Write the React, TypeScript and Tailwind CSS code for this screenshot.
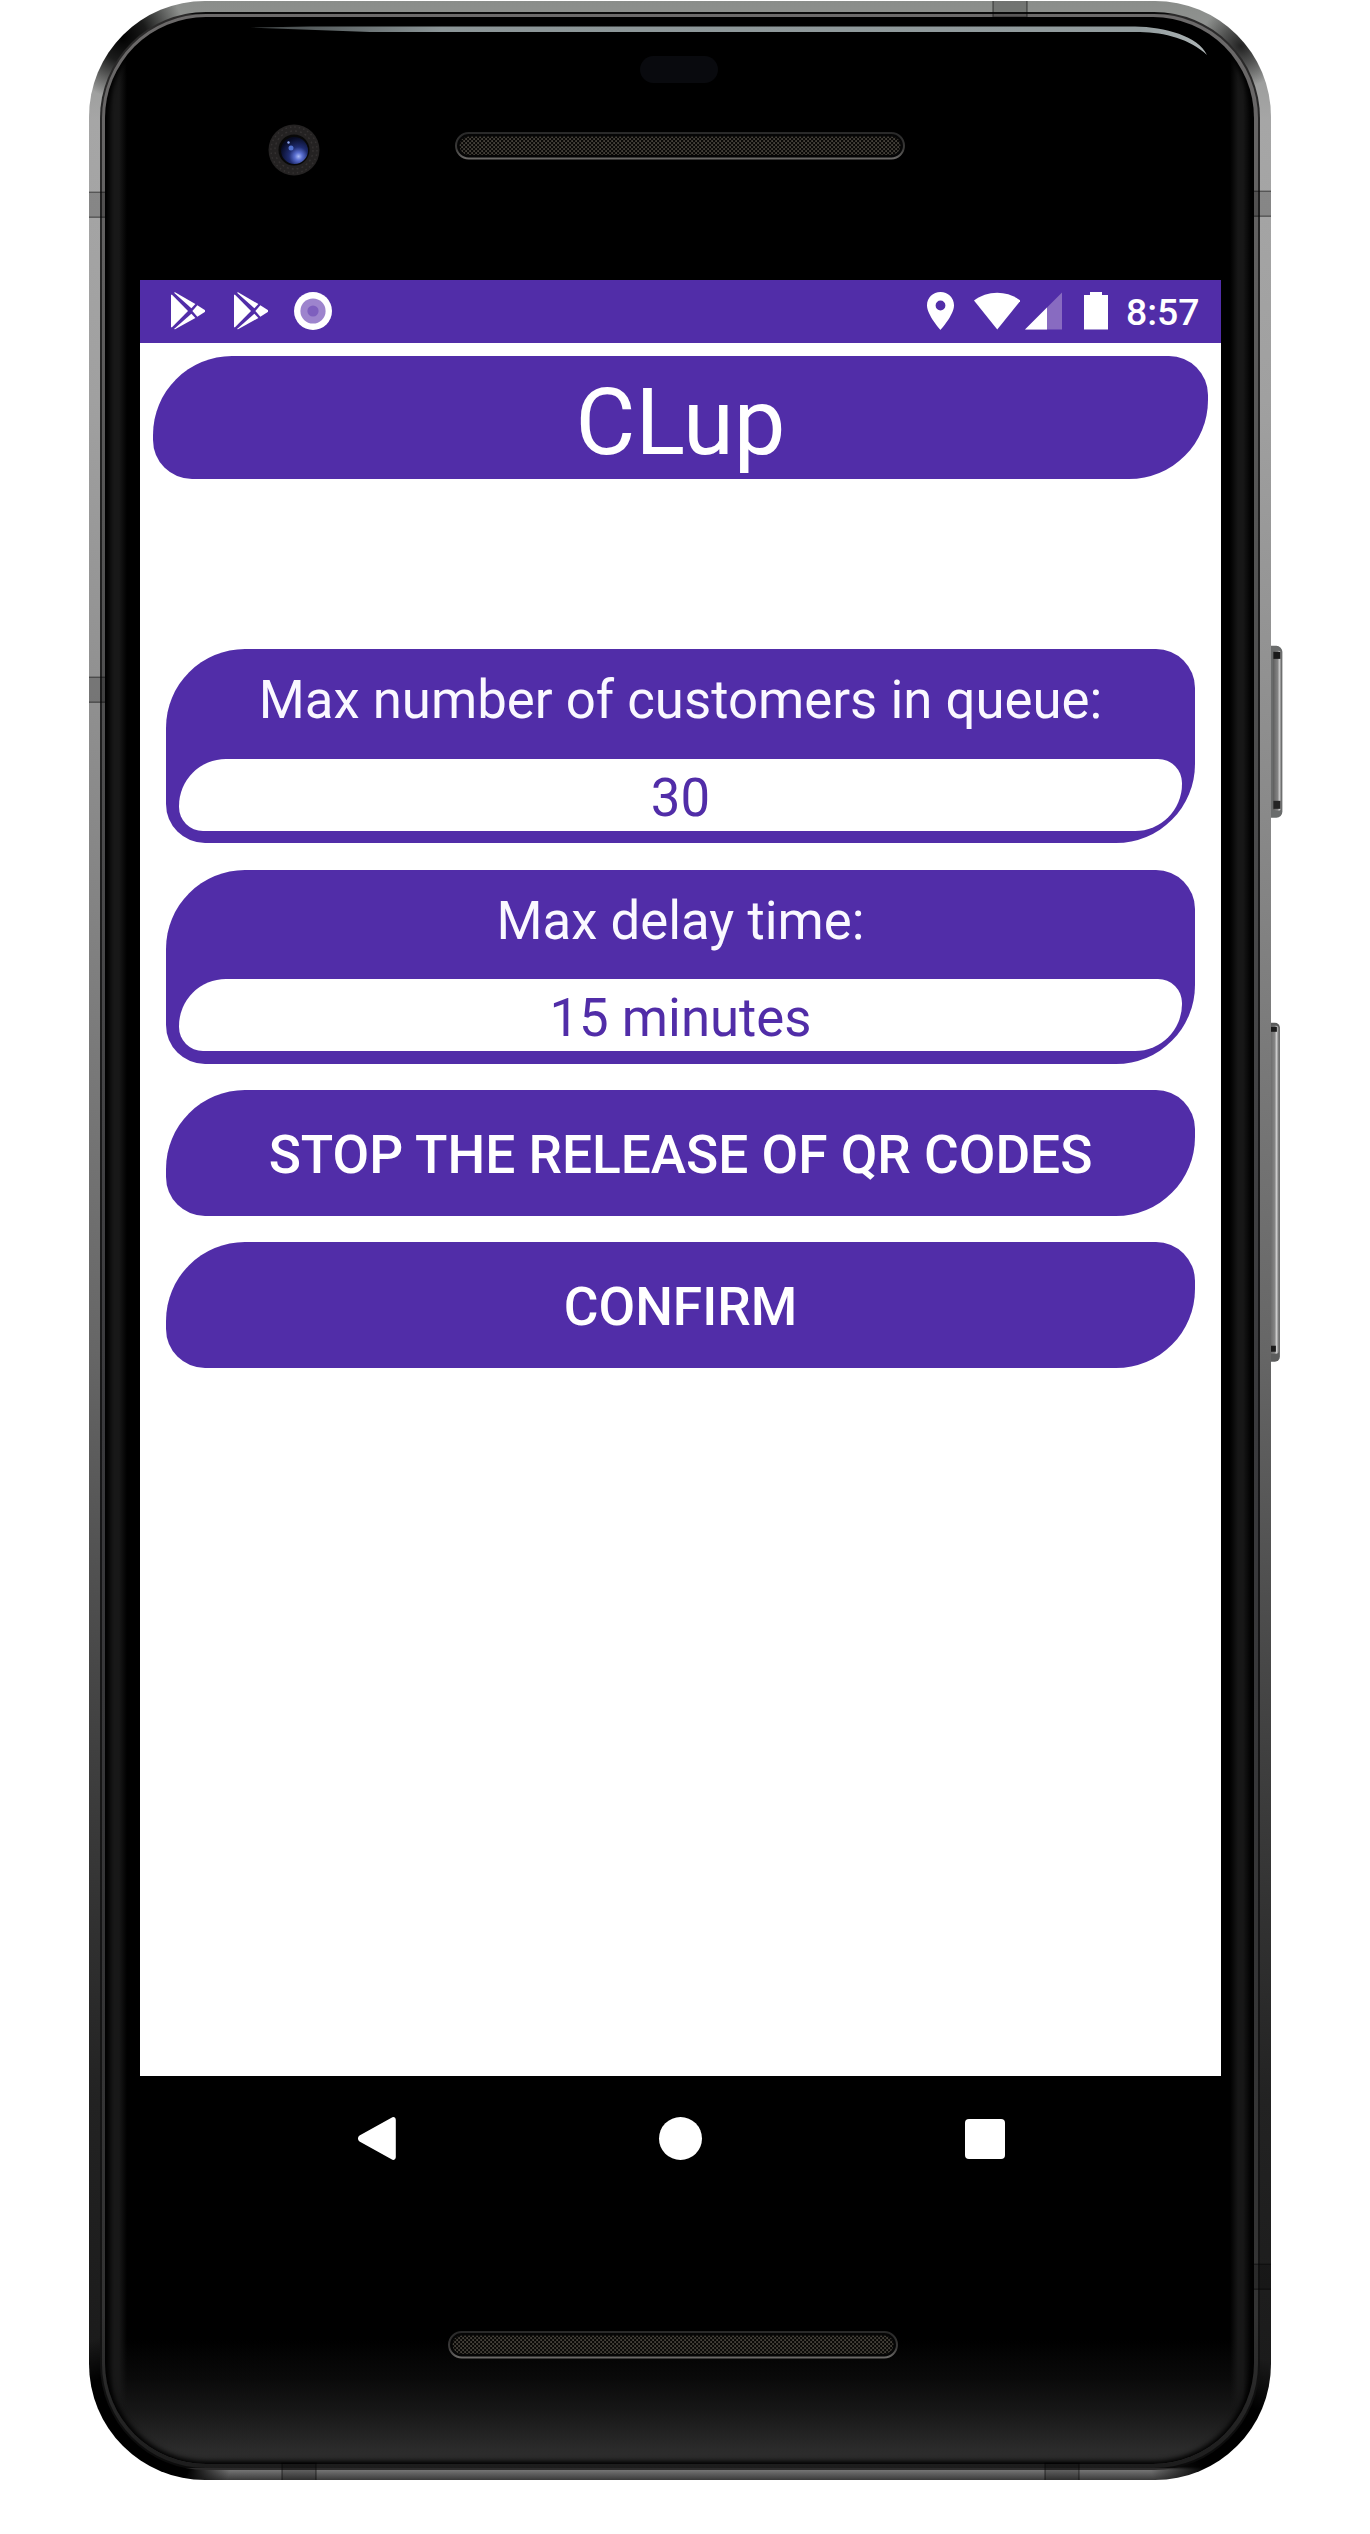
import React from "react";

const card =
  "rounded-tl-[79px] rounded-tr-[39px] rounded-br-[79px] rounded-bl-[39px] bg-[#512da8]";

function PlayIcon() {
  return (
    <svg className="h-[37.7px] w-[34.4px]" viewBox="0 0 103 113" fill="#fff">
      <path d="M0 8 3 8 51 57 3 106 0 106Z" />
      <path d="M9 2 12 1 73 36 61 49Z" />
      <path d="M9 111 12 112 73 78 61 65Z" />
      <path d="M79 40 100 53Q105 57 100 61L79 74 64 57Z" />
    </svg>
  );
}

function StatusBar() {
  return (
    <div className="flex h-[63px] items-start justify-between bg-[#512da8] pl-[31px] pr-[21.5px] pt-[12.3px]">
      <div className="flex items-start gap-[28.6px]">
        <PlayIcon />
        <PlayIcon />
        <svg className="-ml-[2.6px] h-[38px] w-[38px]" viewBox="0 0 38 38">
          <circle cx="19" cy="19" r="19" fill="#fff" />
          <circle cx="19" cy="19" r="12.6" fill="#9d84cd" />
          <circle cx="19" cy="19" r="5.6" fill="#7e5fbe" />
        </svg>
      </div>
      <div className="flex items-start gap-[20px]">
        <svg className="h-[38px] w-[27px]" viewBox="0 0 27 38" fill="#fff">
          <path
            fillRule="evenodd"
            d="M13.5 0C6 0 0 5.9 0 13.3 0 23.2 13.5 38 13.5 38S27 23.2 27 13.3C27 5.9 21 0 13.5 0Zm0 8.6a4.9 4.9 0 1 1 0 9.8 4.9 4.9 0 0 1 0-9.8Z"
          />
        </svg>
        <div className="flex gap-[5px]">
          <svg className="h-[38px] w-[46.5px]" viewBox="0 0 46.5 38" fill="#fff">
            <path d="M0 8.6C6.5 3.6 14.5.8 23.25.8S40 3.6 46.5 8.6L23.25 37.5Z" />
          </svg>
          <svg className="h-[38px] w-[37px]" viewBox="0 0 37 38">
            <path d="M0 37.5 37 .5V37.5Z" fill="#886bc1" />
            <path d="M0 37.5 22 15.5V37.5Z" fill="#fff" />
          </svg>
        </div>
        <svg className="ml-[2px] h-[38px] w-[24px]" viewBox="0 0 24 38" fill="#fff">
          <path d="M6 0H18V3H24V37.5H0V3H6Z" />
        </svg>
        <span className="-ml-[2.5px] pt-px text-[37.4px] font-medium leading-[38px] text-white">8:57</span>
      </div>
    </div>
  );
}

function Field({ label, value }: { label: string; value: string }) {
  return (
    <section className={`flex h-[194.2px] flex-col px-[13px] text-center text-[52.75px] ${card}`}>
      <h2 className="h-[109.9px] pt-[20px] leading-[62px] text-[#faf8ff]">{label}</h2>
      <div className="h-[71.5px] rounded-tl-[47px] rounded-tr-[24px] rounded-br-[47px] rounded-bl-[24px] bg-white pt-[7.5px] leading-[62px] text-[#512da8]">
        {value}
      </div>
    </section>
  );
}

function ActionButton({ children }: { children: React.ReactNode }) {
  return (
    <button
      className={`flex h-[126px] w-full items-center justify-center pt-[4px] text-[53.2px] font-medium leading-[62px] text-white ${card}`}
    >
      {children}
    </button>
  );
}

function Screen() {
  return (
    <main className="flex h-[1795.6px] flex-col bg-white">
      <StatusBar />
      <div className="flex flex-col p-[13px]">
        <h1 className={`h-[123.3px] pt-[13px] text-center text-[92px] leading-[108px] text-white ${card}`}>
          CLup
        </h1>
        <div className="flex flex-col gap-[26.1px] px-[13px] pt-[170px]">
          <Field label="Max number of customers in queue:" value="30" />
          <Field label="Max delay time:" value="15 minutes" />
          <ActionButton>STOP THE RELEASE OF QR CODES</ActionButton>
          <ActionButton>CONFIRM</ActionButton>
        </div>
      </div>
    </main>
  );
}

function Speaker({ id }: { id: string }) {
  return (
    <svg className="h-[28px] w-[450px]" viewBox="0 0 450 28">
      <defs>
        <pattern id={id} width="4" height="4" patternUnits="userSpaceOnUse">
          <rect width="4" height="4" fill="#0b0a08" />
          <rect x="0.3" y="0.3" width="1.6" height="1.5" fill="#5c574e" />
          <rect x="2.3" y="2.3" width="1.6" height="1.5" fill="#5c574e" />
        </pattern>
        <linearGradient id={`${id}-rim`} x1="0" y1="0" x2="0" y2="1">
          <stop offset="0" stopColor="#292929" />
          <stop offset="0.6" stopColor="#3a3938" />
          <stop offset="1" stopColor="#6a6866" />
        </linearGradient>
      </defs>
      <rect x="1" y="1" width="448" height="25.5" rx="12.7" fill="#060606" stroke={`url(#${id}-rim)`} strokeWidth="2" />
      <rect x="4.5" y="4.5" width="441" height="18.5" rx="9.2" fill={`url(#${id})`} />
    </svg>
  );
}

function Camera() {
  return (
    <svg className="h-[52px] w-[52px]" viewBox="0 0 52 52">
      <defs>
        <radialGradient id="lens" cx="0.65" cy="0.72" r="0.7">
          <stop offset="0" stopColor="#a9b9f5" />
          <stop offset="0.2" stopColor="#5a6fd0" />
          <stop offset="0.5" stopColor="#1f2c70" />
          <stop offset="1" stopColor="#070b22" />
        </radialGradient>
      </defs>
      <circle cx="26" cy="26" r="25.5" fill="#242222" />
      <circle cx="26" cy="26" r="23" fill="none" stroke="#343131" strokeWidth="1.5" strokeDasharray="1.5 3" />
      <circle cx="26" cy="26" r="19" fill="none" stroke="#343131" strokeWidth="1.5" strokeDasharray="2 3" />
      <circle cx="26" cy="26" r="15.5" fill="#080808" />
      <circle cx="26.5" cy="26.5" r="13.5" fill="url(#lens)" />
      <circle cx="23" cy="24" r="2.5" fill="#5272cf" />
      <circle cx="20.5" cy="18.5" r="1.2" fill="#8ea6ec" />
    </svg>
  );
}

/* Earpiece, camera and proximity sensor above the display */
function TopBezel() {
  return (
    <header className="flex h-[263px] flex-col pt-2">
      <svg className="ml-[145px] h-[32px] w-[960px]" viewBox="0 0 960 32">
        <defs>
          <linearGradient id="sheen">
            <stop offset="0" stopColor="#3d4243" />
            <stop offset="0.2" stopColor="#8b9597" />
            <stop offset="0.93" stopColor="#929c9e" />
            <stop offset="1" stopColor="#aeb5b6" />
          </linearGradient>
        </defs>
        <path d="M0 2.5 60 1.5H885C915 2 948 11 957 30 940 14 915 7.5 890 7H120Z" fill="url(#sheen)" />
      </svg>
      <div className="-mt-px ml-[535px] h-[27px] w-[78px] rounded-full bg-[#090a0e]" />
      <div className="flex items-start gap-[135px] pl-[163px] pt-[41px]">
        <Camera />
        <div className="pt-2">
          <Speaker id="earpiece" />
        </div>
      </div>
    </header>
  );
}

function NavBar() {
  return (
    <nav className="flex h-[127px] items-center justify-between pb-[1px] pl-[217.5px] pr-[216px]">
      <svg className="h-[43px] w-[38px]" viewBox="0 0 38 43" fill="#fff">
        <path d="M33.5.8C35.5-.8 37.8.5 37.8 3V40C37.8 42.5 35.5 43.8 33.5 42.2L1.5 24.5C-.5 23-.5 20 1.5 18.5Z" />
      </svg>
      <div className="ml-[0.5px] h-[43px] w-[43px] rounded-full bg-white" />
      <div className="h-[40px] w-[40px] rounded-[4px] bg-white" />
    </nav>
  );
}

/* Volume and power keys on the right edge */
function SideKeys() {
  return (
    <svg className="absolute inset-0 h-full w-[1200px]" viewBox="0 0 1200 2479">
      <defs>
        <linearGradient id="key">
          <stop offset="0" stopColor="#5c5c5c" />
          <stop offset="0.25" stopColor="#707070" />
          <stop offset="0.6" stopColor="#868686" />
          <stop offset="0.75" stopColor="#cfcfcf" />
          <stop offset="1" stopColor="#747474" />
        </linearGradient>
      </defs>
      <rect x="1170" y="645" width="23.5" height="172" rx="6" fill="#6a6c6c" />
      <rect x="1184" y="650" width="8.5" height="160" rx="3" fill="url(#key)" />
      <rect x="1184.5" y="651" width="7" height="7" fill="#1a1a1a" />
      <rect x="1184.5" y="800" width="7" height="8" fill="#242424" />
      <rect x="1170" y="1022" width="21" height="339" rx="5" fill="#5c5d5d" />
      <rect x="1180" y="1025" width="10" height="328" rx="3" fill="url(#key)" />
      <rect x="1181" y="1026" width="7" height="5" fill="#1a1a1a" />
      <rect x="1181" y="1345" width="6" height="6" fill="#1a1a1a" />
    </svg>
  );
}

/* Antenna inserts in the metal frame */
function AntennaBands() {
  return (
    <svg
      className="absolute inset-0 h-full w-full"
      viewBox="0 0 1182 2478"
      fill="#000"
      fillOpacity="0.18"
      stroke="#000"
      strokeOpacity="0.4"
      strokeWidth="1.5"
    >
      <rect x="-2" y="191" width="19" height="25" />
      <rect x="-2" y="676" width="19" height="25" />
      <rect x="1164" y="190" width="20" height="25" />
      <rect x="1164" y="2263" width="20" height="25" />
      <rect x="904" y="-2" width="34" height="18" />
      <rect x="193" y="2462" width="34" height="18" />
      <rect x="956" y="2462" width="34" height="18" />
    </svg>
  );
}

export default function App() {
  return (
    <div className="h-[2534px] w-[1370px] overflow-hidden bg-white pl-[88.5px] pt-px font-['Roboto',sans-serif]">
      <div className="relative h-[2478.5px] w-[1182px]">
        <SideKeys />

        {/* Metal frame */}
        <div className="relative h-full w-full overflow-hidden rounded-[116px] bg-[radial-gradient(circle_at_34px_36px,#000_0,#000000d0_24px,transparent_62px),radial-gradient(circle_at_1152px_45px,#222_0,#22222290_20px,transparent_42px),radial-gradient(circle_at_34px_2444px,#000_0,#000_70px,transparent_110px),radial-gradient(circle_at_1148px_2444px,#000_0,#000_40px,transparent_90px),linear-gradient(0deg,#3a3a3a_0,#757575_10px,#4a4a4a_12px,transparent_13px),linear-gradient(180deg,#8a8d8a_0,#a6a6a6_120px,#a0a0a0_400px,#8a8a8a_800px,#666_1350px,#444_1700px,#222_2100px,#181818_2479px)] p-[11px] pb-[10px]">
          {/* Inner rim and glass */}
          <div className="h-full w-full rounded-[106px] border-2 border-black/60 bg-[linear-gradient(180deg,#6c6a6a_0,#555_500px,#3a3a3d_1400px,#333_2300px,#1c1c1c_2458px)] p-[3.5px] pt-[3px] pb-[4px]">
            <div className="flex h-full w-full flex-col overflow-hidden rounded-[101px] bg-[#000] bg-[linear-gradient(90deg,#060606_0,#181818_9px,#181818_14px,transparent_22px,transparent_1125px,#171717_1133px,#171717_1138px,#040404_1146px),linear-gradient(0deg,#2e2e2e_0,#2b2b2b_14px,#161616_55px,#0a0a0a_85px,transparent_125px)] shadow-[inset_0_0_5px_3px_#000]">
              <TopBezel />
              <div className="flex w-[1116px] flex-col pl-[35px]">
                <Screen />
                <NavBar />
              </div>
              <footer className="flex pl-[343px] pt-[128.5px]">
                <Speaker id="loudspeaker" />
              </footer>
            </div>
          </div>
          <AntennaBands />
        </div>
      </div>
    </div>
  );
}
